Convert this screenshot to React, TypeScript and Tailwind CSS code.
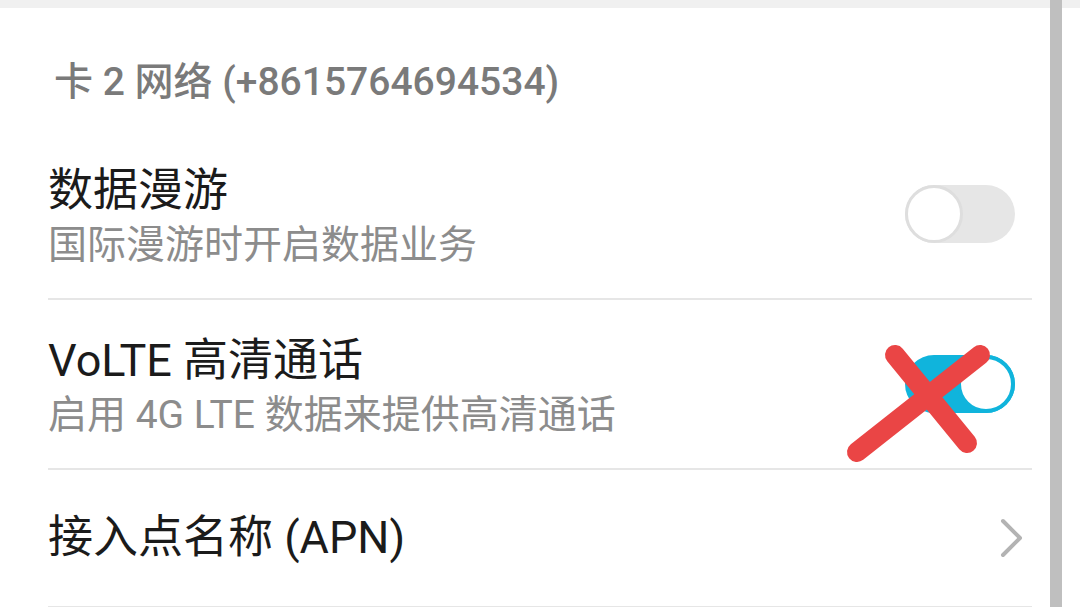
import React from "react";

const font = {
  fontFamily: '"Roboto", "Noto Sans CJK SC", sans-serif',
};

// simple switch, on = cyan track with the knob to the right
const Toggle = ({ on }: { on: boolean }) => {
  return (
    <div
      className={
        on
          ? "w-[110px] h-[58px] rounded-full bg-[#10b4dc] flex items-center justify-end"
          : "w-[110px] h-[58px] rounded-full bg-[#e6e6e6] flex items-center justify-start"
      }
    >
      <div
        className={
          on
            ? "w-[58px] h-[58px] rounded-full bg-white border-[4px] border-[#10b4dc]"
            : "w-[58px] h-[58px] rounded-full bg-white border-[3px] border-[#dedede]"
        }
      />
    </div>
  );
};

const Divider = () => <div className="h-[2px] bg-[#e6e6e6]" />;

const SwitchRow = ({
  title,
  summary,
  on,
}: {
  title: string;
  summary: string;
  on: boolean;
}) => (
  <div className="h-[168px] flex items-center justify-between pr-[17px]">
    <div className="flex flex-col h-full pt-[35px]">
      <span className="text-[45px] leading-[52px] text-[#1b1b1b]">{title}</span>
      <span className="text-[39px] leading-[56px] text-[#8c8c8c]">{summary}</span>
    </div>
    <Toggle on={on} />
  </div>
);

export default function App() {
  return (
    <div
      className="relative w-[1080px] h-[607px] bg-white overflow-hidden"
      style={font}
    >
      <div className="h-[8px] bg-[#f0f0f0]" />

      <div className="w-[1032px] pl-[48px]">
        <div className="h-[122px] pt-[50px] pl-[6px]">
          <span className="text-[39px] leading-[48px] font-medium text-[#7a7a7a]">
            卡 2 网络 (+8615764694534)
          </span>
        </div>

        <SwitchRow title="数据漫游" summary="国际漫游时开启数据业务" on={false} />
        <Divider />
        <SwitchRow
          title="VoLTE 高清通话"
          summary="启用 4G LTE 数据来提供高清通话"
          on={true}
        />
        <Divider />

        <div className="h-[136px] flex items-center justify-between pr-[7px]">
          <span className="text-[45px] leading-[52px] text-[#1b1b1b]">
            接入点名称 (APN)
          </span>
          <svg width="26" height="40" viewBox="0 0 26 40" fill="none">
            <path
              d="M4 3 L21 20 L4 37"
              stroke="#b3b3b3"
              strokeWidth="4"
              strokeLinecap="round"
              strokeLinejoin="round"
            />
          </svg>
        </div>
        <Divider />
      </div>

      {/* scrollbar */}
      <div className="absolute top-0 right-[18px] w-[12px] h-full bg-[#bfbfbf]" />

      {/* red cross drawn over the VoLTE switch */}
      <svg
        className="absolute inset-0 pointer-events-none"
        width="1080"
        height="607"
        viewBox="0 0 1080 607"
      >
        <path
          d="M895 355 L967 443 M980 355 L857 452"
          stroke="#ea4545"
          strokeWidth="20"
          strokeLinecap="round"
        />
      </svg>
    </div>
  );
}
